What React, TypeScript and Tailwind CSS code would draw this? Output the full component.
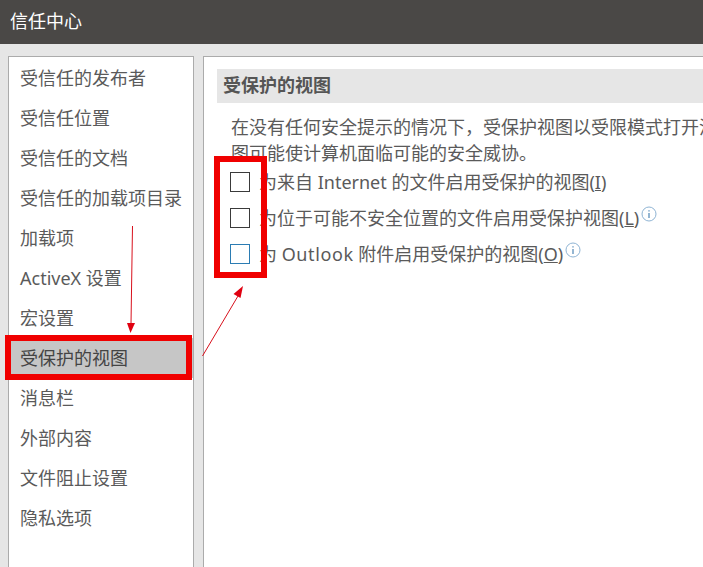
import type { ReactNode } from "react";

const navItems = [
  "受信任的发布者",
  "受信任位置",
  "受信任的文档",
  "受信任的加载项目录",
  "加载项",
  "ActiveX 设置",
  "宏设置",
  "受保护的视图",
  "消息栏",
  "外部内容",
  "文件阻止设置",
  "隐私选项",
];

const font = "font-['Noto_Sans','Noto_Sans_CJK_SC',sans-serif]";

function InfoIcon() {
  return (
    <svg viewBox="0 0 16 16" className="ml-0.5 -mt-2 h-4 w-4 shrink-0" fill="none">
      <circle cx="8" cy="8" r="7" stroke="#8fb4d4" strokeWidth="1" />
      <path d="M8 4.2v1.4M8 7v5" stroke="#4f86b5" strokeWidth="1.2" />
    </svg>
  );
}

function Option({
  label,
  hotkey,
  info,
  blue,
}: {
  label: ReactNode;
  hotkey: string;
  info?: boolean;
  blue?: boolean;
}) {
  return (
    <div className="flex h-9 items-center">
      <div
        className={`h-5 w-5 shrink-0 border bg-white ${blue ? "border-[#2b7cb3]" : "border-[#3a3a3a]"}`}
      />
      <span className="ml-[9px] whitespace-nowrap text-[18px] leading-6 text-[#5a5a5a]">
        {label}(<span className="underline">{hotkey}</span>)
      </span>
      {info && <InfoIcon />}
    </div>
  );
}

export default function App() {
  return (
    <div className={`relative flex h-[567px] w-[703px] flex-col overflow-hidden bg-[#e6e6e6] ${font}`}>
      <header className="flex h-11 shrink-0 items-center bg-[#4a4846] pb-0.5 pl-2.5 text-[18px] leading-6 text-white">
        信任中心
      </header>

      <div className="flex min-h-0 flex-1 pl-2 pt-3">
        {/* left nav */}
        <nav className="h-[540px] w-[186px] shrink-0 border border-[#ababab] bg-white pt-px">
          {navItems.map((item) => (
            <div
              key={item}
              className={`flex h-10 items-center pl-[11px] text-[18px] leading-6 text-[#5a5a5a] ${
                item === "受保护的视图" ? "bg-[#c6c6c6] text-[#444444]" : ""
              }`}
            >
              {item}
            </div>
          ))}
        </nav>

        {/* right panel */}
        <main className="ml-[9px] h-[540px] min-w-0 flex-1 overflow-hidden border-t border-l border-[#ababab] bg-white pl-[13px] pt-3">
          <h2 className="flex h-[34px] items-center bg-[#e6e6e6] pb-0.5 pl-[6px] text-[18px] leading-6 font-bold text-[#555555]">
            受保护的视图
          </h2>
          <p className="mt-[11px] whitespace-nowrap pl-[14px] text-[18px] leading-[26px] text-[#5a5a5a]">
            在没有任何安全提示的情况下，受保护视图以受限模式打开潜在危险文件。禁用受保护的视
            <br />
            图可能使计算机面临可能的安全威协。
          </p>
          <div className="mt-[-2px] pl-[13px]">
            <Option label="为来自 Internet 的文件启用受保护的视图" hotkey="I" />
            <Option label="为位于可能不安全位置的文件启用受保护视图" hotkey="L" info />
            <Option
              label={
                <>
                  为 <span className="tracking-[0.6px]">Outlook</span> 附件启用受保护的视图
                </>
              }
              hotkey="O"
              info
              blue
            />
          </div>
        </main>
      </div>

      {/* red annotations over the screenshot */}
      <div className="absolute left-[5px] top-[335px] h-[45px] w-[187px] border-[6px] border-[#f00000]" />
      <div className="absolute left-[214px] top-[156px] h-[122px] w-[53px] border-[6px] border-[#f00000]" />
      <svg className="pointer-events-none absolute left-0 top-0" width="703" height="567">
        <path d="M132.5 226L131 324" stroke="#d8101c" strokeWidth="1" fill="none" />
        <path d="M127 323L135 323L130.5 333Z" fill="#e00010" />
        <path d="M202.5 356L238 296" stroke="#d8101c" strokeWidth="1" fill="none" />
        <path d="M243 286L240.5 298L233.5 294Z" fill="#e00010" />
      </svg>
    </div>
  );
}
